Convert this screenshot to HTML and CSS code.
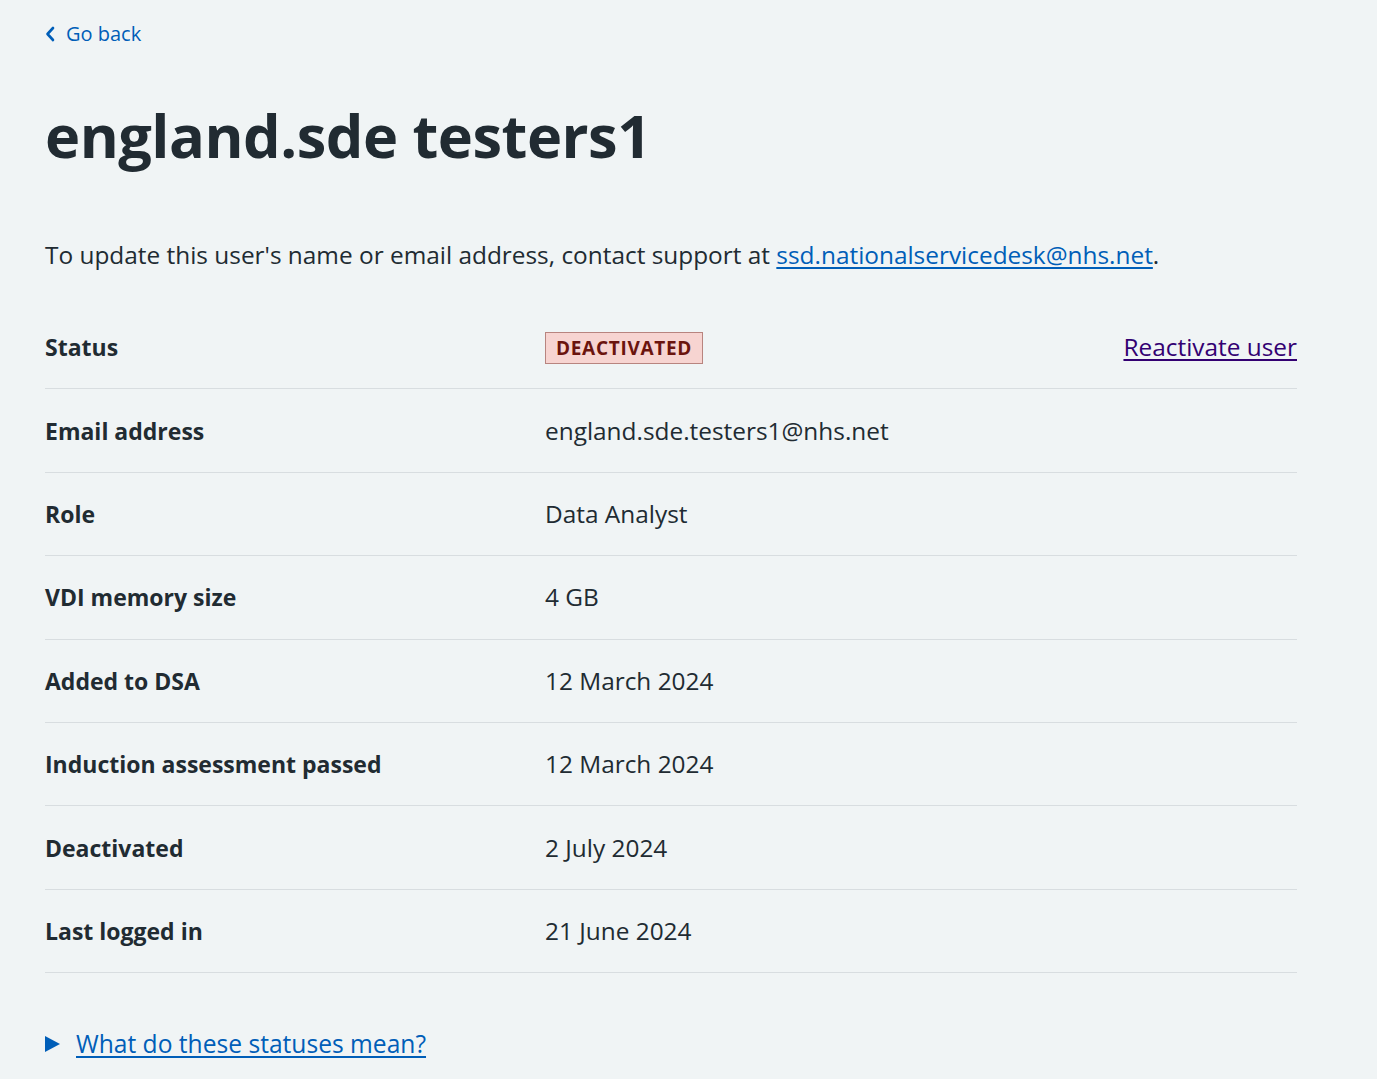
FILE: index.html
```html
<!DOCTYPE html>
<html lang="en">
<head>
<meta charset="utf-8">
<title>england.sde testers1</title>
<link rel="stylesheet" href="styles.css">
</head>
<body>
<main class="page">
  <a class="back-link" href="#">
    <svg class="back-icon" viewBox="0 0 10 16" width="10" height="16" aria-hidden="true"><path d="M8 2 L2.5 8 L8 14" fill="none" stroke="currentColor" stroke-width="2.6" stroke-linecap="round" stroke-linejoin="round"/></svg>
    <span>Go back</span>
  </a>
  <h1 class="title">england.sde testers1</h1>
  <p class="intro">To update this user's name or email address, contact support at <a class="link" href="#">ssd.nationalservicedesk@nhs.net</a>.</p>

  <dl class="summary">
    <div class="row">
      <dt class="key">Status</dt>
      <dd class="value"><strong class="tag">Deactivated</strong></dd>
      <dd class="action"><a class="link visited" href="#">Reactivate user</a></dd>
    </div>
    <div class="row">
      <dt class="key">Email address</dt>
      <dd class="value">england.sde.testers1@nhs.net</dd>
      <dd class="action"></dd>
    </div>
    <div class="row">
      <dt class="key">Role</dt>
      <dd class="value">Data Analyst</dd>
      <dd class="action"></dd>
    </div>
    <div class="row">
      <dt class="key">VDI memory size</dt>
      <dd class="value">4 GB</dd>
      <dd class="action"></dd>
    </div>
    <div class="row">
      <dt class="key">Added to DSA</dt>
      <dd class="value">12 March 2024</dd>
      <dd class="action"></dd>
    </div>
    <div class="row">
      <dt class="key">Induction assessment passed</dt>
      <dd class="value">12 March 2024</dd>
      <dd class="action"></dd>
    </div>
    <div class="row">
      <dt class="key">Deactivated</dt>
      <dd class="value">2 July 2024</dd>
      <dd class="action"></dd>
    </div>
    <div class="row">
      <dt class="key">Last logged in</dt>
      <dd class="value">21 June 2024</dd>
      <dd class="action"></dd>
    </div>
  </dl>

  <div class="details">
    <span class="details-arrow" aria-hidden="true"></span>
    <a class="link details-link" href="#">What do these statuses mean?</a>
  </div>
</main>
</body>
</html>
```

FILE: styles.css
```css
* { box-sizing: border-box; }

html, body {
  margin: 0;
  padding: 0;
  background: #f0f4f5;
}

body {
  font-family: "Open Sans", "Noto Sans", Arial, sans-serif;
  color: #212b32;
}

.page {
  padding: 18px 80px 0 45px;
}

.back-link {
  display: inline-flex;
  align-items: center;
  gap: 11px;
  color: #005eb8;
  text-decoration: none;
  font-size: 20px;
  line-height: 32px;
}

.back-icon {
  display: block;
}

.title {
  margin: 49px 0 0 0;
  font-size: 59.5px;
  font-weight: 700;
  line-height: 72px;
  letter-spacing: -0.5px;
}

.intro {
  margin: 68px 0 0 0;
  font-size: 24.4px;
  line-height: 32px;
}

.link {
  color: #005eb8;
  text-decoration: underline;
  text-underline-offset: 3px;
  text-decoration-thickness: 2px;
}

.link.visited {
  color: #330072;
}

.summary {
  margin: 35px 0 0 0;
  padding: 0;
}

.row {
  display: grid;
  grid-template-columns: 500px 1fr auto;
  align-items: center;
  min-height: 83.4px;
  border-bottom: 1px solid #d8dde0;
  font-size: 24.4px;
  line-height: 32px;
}

.key {
  font-weight: 700;
  font-size: 23px;
  margin: 0;
}

.value, .action {
  margin: 0;
}

.tag {
  display: inline-block;
  background: #f7d4d1;
  color: #6b140e;
  border: 1px solid #b8847f;
  font-size: 19px;
  font-weight: 700;
  line-height: 30px;
  padding: 0 10px;
  text-transform: uppercase;
  letter-spacing: 0.7px;
  vertical-align: middle;
}

.details {
  display: flex;
  align-items: center;
  gap: 16px;
  margin-top: 55px;
  font-size: 24.6px;
  line-height: 32px;
}

.details-arrow {
  width: 0;
  height: 0;
  border-top: 8px solid transparent;
  border-bottom: 8px solid transparent;
  border-left: 15px solid #005eb8;
}
```
